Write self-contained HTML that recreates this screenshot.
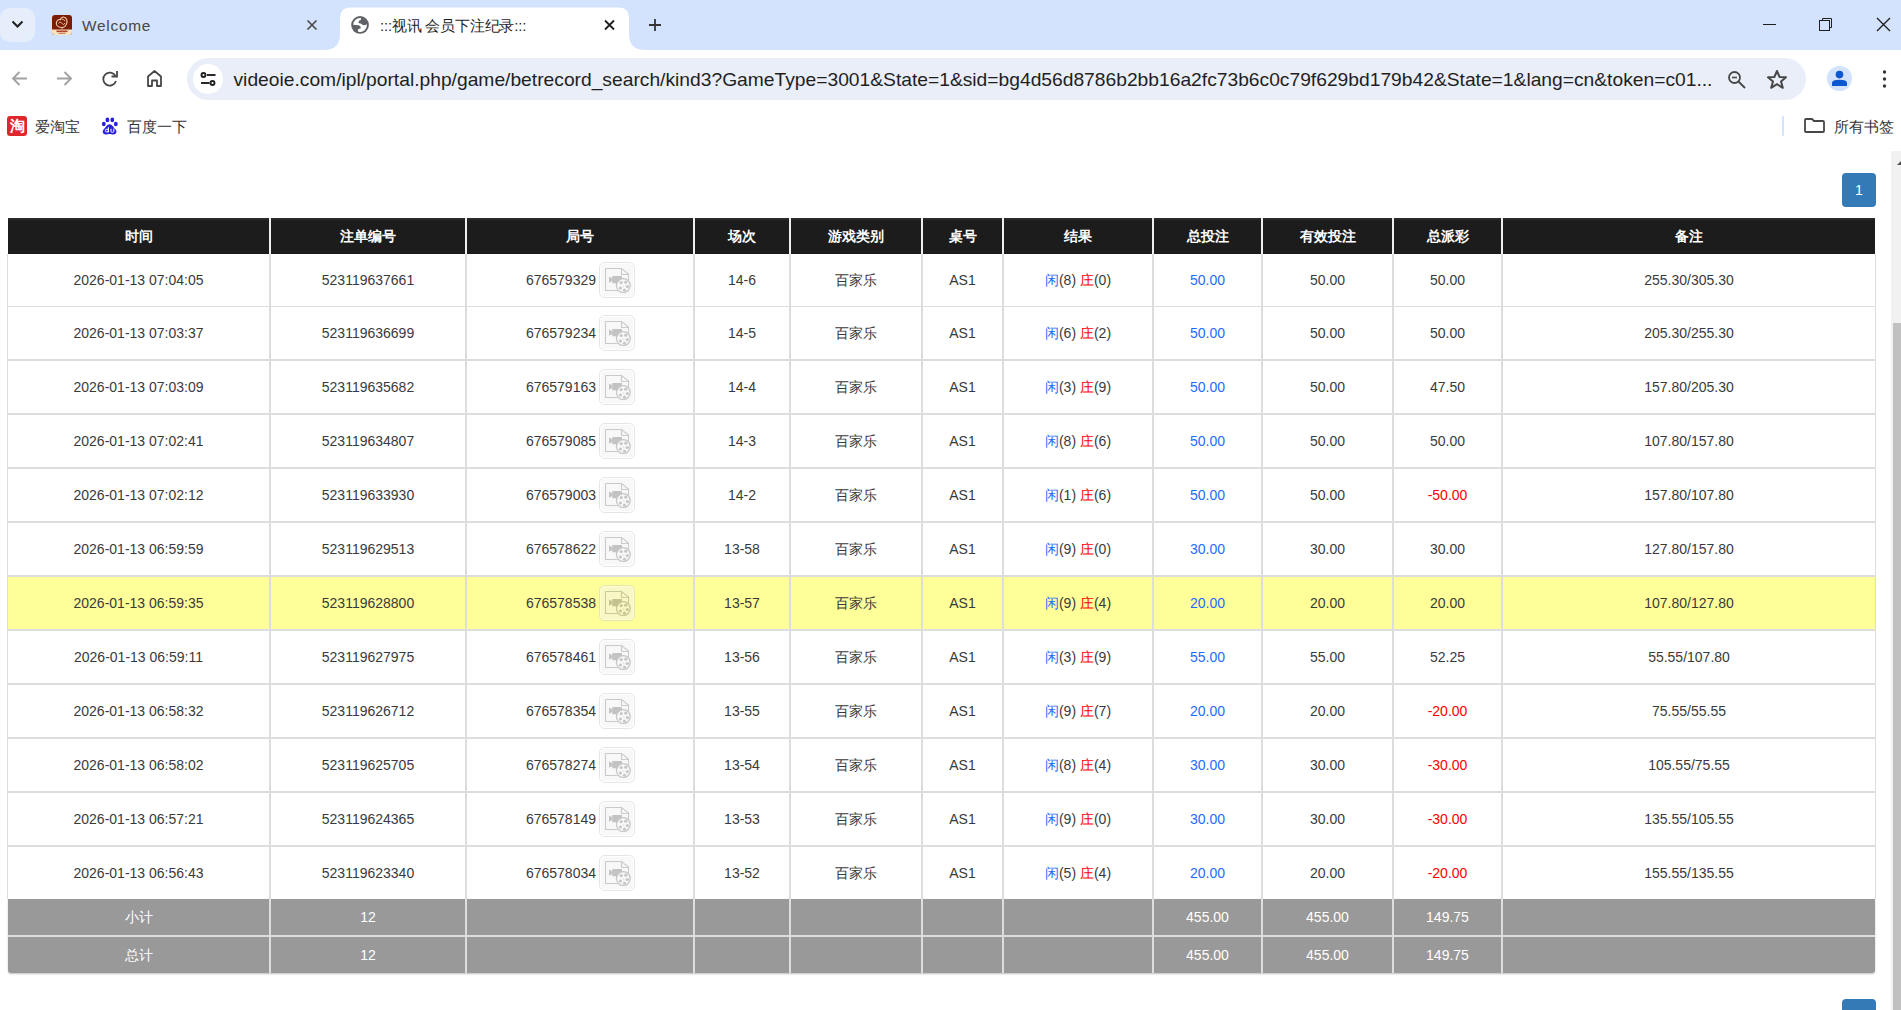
<!DOCTYPE html>
<html><head><meta charset="utf-8">
<style>
*{box-sizing:border-box;margin:0;padding:0}
html,body{width:1901px;height:1010px;overflow:hidden;background:#fff;font-family:"Liberation Sans",sans-serif}
body{position:relative}
.abs{position:absolute}
svg{position:absolute;overflow:visible}
#tabs{left:0;top:0;width:1901px;height:50px;background:#d3e3fd}
#omni{left:187px;top:58px;width:1619px;height:42px;border-radius:21px;background:#eaeef8}
#url{left:233.5px;top:67.7px;font-size:19.24px;color:#1f1f1f;white-space:nowrap;line-height:24px}
.bmt{font-size:14.5px;color:#333;white-space:nowrap;line-height:20px}
.tabt{font-size:15px;white-space:nowrap;line-height:20px}
.hd{position:absolute;top:218px;height:36px;background:linear-gradient(#2e2e2e,#1c1c1c 3px)}
.vl{position:absolute;width:2px;background:#ddd}
.hl{position:absolute;height:1px;background:#ddd}
.cell{position:absolute;text-align:center;font-size:14px;color:#3a3a3a;white-space:nowrap;line-height:18px}
.ft{color:#fff}
.th{position:absolute;text-align:center;font-size:14px;color:#fff;font-weight:bold;white-space:nowrap;top:226px;line-height:20px}
.blue{color:#1f6bff}
.red{color:#f00}
.vbox{position:absolute}
.pg{position:absolute;width:34px;height:34px;background:#337ab7;border-radius:4px;color:#fff;font-size:14px;text-align:center;line-height:34px}
</style></head><body>
<div id="tabs" class="abs"></div>
<!-- tab dropdown -->
<div class="abs" style="left:0;top:8px;width:35px;height:34px;border-radius:10px;background:#e6eefc"></div>
<svg style="left:0;top:0" width="40" height="50"><path d="M12.5 21.5 L17.5 26.5 L22.5 21.5" fill="none" stroke="#1f1f1f" stroke-width="2"/></svg>
<!-- inactive tab favicon -->
<svg style="left:52px;top:15px" width="20" height="20" viewBox="0 0 20 20">
  <defs><clipPath id="fc"><rect x="0" y="0" width="20" height="20" rx="3"/></clipPath></defs>
  <g clip-path="url(#fc)">
    <rect x="0" y="0" width="20" height="20" fill="#7a1d08"/>
    <rect x="0" y="14.5" width="20" height="5.5" fill="#f6e3c0"/>
    <rect x="4.5" y="15.5" width="11" height="1.6" fill="#b2452a"/>
    <rect x="6.5" y="17.8" width="7" height="1" fill="#c46b52"/>
  </g>
  <path d="M10 12.5 C7 12.5 4.3 10.8 4.3 8.2 C4.3 5.6 6.6 4.3 8.4 4.6 C8.9 2.9 10.6 1.6 12.3 2.2 C14.8 3 15.6 6 14.6 8.6 C13.8 10.8 12 12.5 10 12.5 Z" fill="none" stroke="#f1d2a8" stroke-width="1.1"/>
  <path d="M6.5 8.3 C7.5 6.8 9.5 7 10.2 8.6 C10.8 10 12.6 9.6 12.8 8.1 M9.8 4.5 C11 4 12.6 4.8 13 6.3" fill="none" stroke="#f1d2a8" stroke-width="0.9"/>
  <path d="M10 12.5 L9.3 14.3 L10.7 14.3 Z" fill="#f1d2a8"/>
</svg>
<div class="abs tabt" style="left:82px;top:16px;color:#474747;font-size:15.4px;letter-spacing:0.75px">Welcome</div>
<svg style="left:0;top:0" width="700" height="50">
  <path d="M307.5 20.5 L316.5 29.5 M316.5 20.5 L307.5 29.5" stroke="#474747" stroke-width="1.6"/>
  <!-- active tab shape -->
  <path d="M324 50 Q340 50 340 34 L340 18 Q340 7.5 350 7.5 L619 7.5 Q629 7.5 629 18 L629 34 Q629 50 645 50 Z" fill="#fff"/>
  <circle cx="360.05" cy="24.88" r="8.84" fill="#5f6368"/><path d="M353.11 24.64 A6.94 6.94 0 0 1 360.95 18.11 L360.83 19.89 L358.93 20.84 L358.46 22.98 L361.31 23.69 L362.73 25.12 L364.63 25.36 L366.77 24.17 A6.94 6.94 0 0 1 358.22 31.77 L357.74 30.59 L358.22 29.16 L360.83 28.21 L360.36 26.31 L358.69 25.36 Z" fill="#fff"/>
  <path d="M605 20.5 L614 29.5 M614 20.5 L605 29.5" stroke="#1f1f1f" stroke-width="1.8"/>
  <path d="M655 19 L655 31 M649 25 L661 25" stroke="#333" stroke-width="1.8"/>
</svg>
<div class="abs tabt" style="left:380px;top:16px;color:#1f1f1f;letter-spacing:-0.2px">:::视讯 会员下注纪录:::</div>
<!-- window controls -->
<svg style="left:0;top:0" width="1901" height="50">
  <path d="M1763 24.5 L1776 24.5" stroke="#1f1f1f" stroke-width="1"/>
  <rect x="1819.5" y="20.5" width="10" height="10" fill="none" stroke="#1f1f1f" stroke-width="1"/>
  <path d="M1822.5 20.5 L1822.5 18.5 L1831.5 18.5 L1831.5 27.5 L1829.5 27.5" fill="none" stroke="#1f1f1f" stroke-width="1"/>
  <path d="M1877 18 L1890 31 M1890 18 L1877 31" stroke="#1f1f1f" stroke-width="1.35"/>
</svg>
<!-- toolbar -->
<svg style="left:0;top:0" width="200" height="110">
  <path d="M27 78.5 L13 78.5 M19.5 72 L13 78.5 L19.5 85" fill="none" stroke="#a2a2a2" stroke-width="1.9"/>
  <path d="M57 78.5 L71 78.5 M64.5 72 L71 78.5 L64.5 85" fill="none" stroke="#a2a2a2" stroke-width="1.9"/>
  <path d="M115.5 76 A6.5 6.5 0 1 0 116 81" fill="none" stroke="#474747" stroke-width="1.8"/>
  <path d="M117 71 L117 76.5 L111.5 76.5" fill="none" stroke="#474747" stroke-width="1.8"/>
  <path d="M148 86 L148 76.5 L154.5 71 L161 76.5 L161 86 L157 86 L157 80.5 L152 80.5 L152 86 Z" fill="none" stroke="#474747" stroke-width="1.8" stroke-linejoin="round"/>
</svg>
<div id="omni" class="abs"></div>
<svg style="left:0;top:0" width="1901" height="110">
  <circle cx="208" cy="79" r="15" fill="#fff"/>
  <circle cx="203.5" cy="75" r="2" fill="none" stroke="#1f1f1f" stroke-width="1.9"/>
  <path d="M207 75 L215.5 75" stroke="#1f1f1f" stroke-width="1.9"/>
  <circle cx="212.5" cy="83" r="2" fill="none" stroke="#1f1f1f" stroke-width="1.9"/>
  <path d="M201 83 L209.5 83" stroke="#1f1f1f" stroke-width="1.9"/>
  <!-- zoom out -->
  <circle cx="1734.5" cy="77.5" r="5.5" fill="none" stroke="#474747" stroke-width="1.8"/>
  <path d="M1732 77.5 L1737 77.5" stroke="#474747" stroke-width="1.6"/>
  <path d="M1738.5 81.5 L1745 88" stroke="#474747" stroke-width="1.8"/>
  <!-- star -->
  <path d="M1777 71 L1779.6 77 L1786 77.3 L1781 81.4 L1782.8 87.8 L1777 84.2 L1771.2 87.8 L1773 81.4 L1768 77.3 L1774.4 77 Z" fill="none" stroke="#474747" stroke-width="2" stroke-linejoin="round"/>
  <!-- profile -->
  <circle cx="1839.5" cy="78.5" r="12.6" fill="#d3e3fd"/>
  <circle cx="1839.5" cy="74.6" r="3.8" fill="#0b57d0"/>
  <path d="M1832 86 L1832 83 Q1832 79.8 1839.5 79.8 Q1847 79.8 1847 83 L1847 86 Z" fill="#0b57d0"/>
  <circle cx="1884.5" cy="72" r="1.7" fill="#333"/>
  <circle cx="1884.5" cy="79" r="1.7" fill="#333"/>
  <circle cx="1884.5" cy="86" r="1.7" fill="#333"/>
</svg>
<div id="url" class="abs">videoie.com/ipl/portal.php/game/betrecord_search/kind3?GameType=3001&amp;State=1&amp;sid=bg4d56d8786b2bb16a2fc73b6c0c79f629bd179b42&amp;State=1&amp;lang=cn&amp;token=c01...</div>
<!-- bookmarks -->
<div class="abs" style="left:7px;top:116px;width:20px;height:20px;border-radius:3px;background:#e0262d;color:#fff;font-size:15px;font-weight:bold;line-height:20px;text-align:center">淘</div>
<div class="abs bmt" style="left:35px;top:117px">爱淘宝</div>
<svg style="left:0;top:0" width="200" height="150">
  <ellipse cx="107.4" cy="119.9" rx="1.9" ry="2.4" fill="#2a1fe0"/>
  <ellipse cx="112.3" cy="119.9" rx="1.9" ry="2.4" fill="#2a1fe0"/>
  <ellipse cx="103.8" cy="124" rx="1.9" ry="2.2" fill="#2a1fe0"/>
  <ellipse cx="115.8" cy="124" rx="1.9" ry="2.2" fill="#2a1fe0"/>
  <path d="M109.6 124.3 C112 124.3 113.5 127.3 115 128.8 C117.6 131.4 116.6 134.4 113.5 134.4 C112 134.4 111 133.9 109.6 133.9 C108.2 133.9 107.2 134.4 105.7 134.4 C102.6 134.4 101.6 131.4 104.2 128.8 C105.7 127.3 107.2 124.3 109.6 124.3 Z" fill="#2a1fe0"/>
  <circle cx="106.9" cy="130.6" r="1.5" fill="none" stroke="#fff" stroke-width="1"/>
  <path d="M108.4 127.2 L108.4 132.3 M111 128.8 L111 131.4 Q111 132.3 112.4 132.3 Q113.8 132.3 113.8 131.4 L113.8 128.6" fill="none" stroke="#fff" stroke-width="1"/>
  </svg>
<div class="abs bmt" style="left:127px;top:117px">百度一下</div>
<div class="abs" style="left:1782px;top:116px;width:2px;height:20px;background:#d3e3fd;border-radius:1px"></div>
<svg style="left:0;top:0" width="1901" height="150">
  <path d="M1806 119 L1812 119 L1814 121 L1823 121 Q1824 121 1824 122 L1824 131 Q1824 132 1823 132 L1806 132 Q1805 132 1805 131 L1805 120 Q1805 119 1806 119 Z" fill="none" stroke="#474747" stroke-width="1.8" stroke-linejoin="round"/>
</svg>
<div class="abs bmt" style="left:1834px;top:117px">所有书签</div>
<!-- page -->
<div class="pg" style="left:1842px;top:173px">1</div>
<div class="pg" style="left:1842px;top:999px"></div>
<svg width="0" height="0" style="position:absolute"><defs><symbol id="vid" viewBox="0 0 36 36"><g opacity="0.5">
<rect x="0.5" y="0.5" width="35" height="35" rx="5" fill="#f3f3f3" stroke="#cdcdcd" stroke-width="1"/>
<rect x="1.5" y="1.5" width="33" height="33" rx="4" fill="none" stroke="#ffffff" stroke-width="1"/>
<path d="M6.5 6.5 L22.5 6.5 L29.5 12 L29.5 19" fill="none" stroke="#979797" stroke-width="1.1"/>
<path d="M6.5 6.5 L6.5 28.5 L18.5 28.5" fill="none" stroke="#979797" stroke-width="1.1"/>
<path d="M22.5 6.5 L22.5 12.5 L29.5 12.5" fill="none" stroke="#979797" stroke-width="1.1"/>
<rect x="13.3" y="14" width="9.7" height="7.3" fill="#898989"/>
<path d="M10 14.2 L11.5 15.6 L13.5 16 L13.5 19.3 L11.5 19.7 L10 21.1 Z" fill="#898989"/>
<circle cx="24.3" cy="23.6" r="6.9" fill="#f3f3f3" stroke="#8d8d8d" stroke-width="1.2"/>
<circle cx="22.2" cy="20.6" r="1.6" fill="#919191"/>
<circle cx="26.7" cy="20.2" r="1.6" fill="#919191"/>
<circle cx="28.4" cy="24.6" r="1.6" fill="#919191"/>
<circle cx="25.5" cy="28.2" r="1.6" fill="#919191"/>
<circle cx="21.4" cy="26" r="1.6" fill="#919191"/>
<circle cx="24.8" cy="24.2" r="0.6" fill="#9f9f9f"/>
</g></symbol></defs></svg>
<div class="hd" style="left:8px;width:1867px"></div>
<div class="th" style="left:8px;width:261px">时间</div>
<div class="th" style="left:271px;width:194px">注单编号</div>
<div class="th" style="left:467px;width:226px">局号</div>
<div class="th" style="left:695px;width:94px">场次</div>
<div class="th" style="left:791px;width:130px">游戏类别</div>
<div class="th" style="left:923px;width:79px">桌号</div>
<div class="th" style="left:1004px;width:148px">结果</div>
<div class="th" style="left:1154px;width:107px">总投注</div>
<div class="th" style="left:1263px;width:129px">有效投注</div>
<div class="th" style="left:1394px;width:107px">总派彩</div>
<div class="th" style="left:1503px;width:372px">备注</div>
<div class="cell" style="left:8px;width:261px;top:271px">2026-01-13 07:04:05</div>
<div class="cell" style="left:271px;width:194px;top:271px">523119637661</div>
<div class="cell" style="left:467px;width:129px;top:271px;text-align:right">676579329</div>
<div class="cell" style="left:695px;width:94px;top:271px">14-6</div>
<div class="cell" style="left:791px;width:130px;top:271px">百家乐</div>
<div class="cell" style="left:923px;width:79px;top:271px">AS1</div>
<div class="cell" style="left:1004px;width:148px;top:271px"><span class="blue">闲</span>(8) <span class="red">庄</span>(0)</div>
<div class="cell" style="left:1154px;width:107px;top:271px"><span class="blue">50.00</span></div>
<div class="cell" style="left:1263px;width:129px;top:271px">50.00</div>
<div class="cell" style="left:1394px;width:107px;top:271px">50.00</div>
<div class="cell" style="left:1503px;width:372px;top:271px">255.30/305.30</div>
<svg class="vbox" style="left:599px;top:262px" width="36" height="36"><use href="#vid"/></svg>
<div class="cell" style="left:8px;width:261px;top:324px">2026-01-13 07:03:37</div>
<div class="cell" style="left:271px;width:194px;top:324px">523119636699</div>
<div class="cell" style="left:467px;width:129px;top:324px;text-align:right">676579234</div>
<div class="cell" style="left:695px;width:94px;top:324px">14-5</div>
<div class="cell" style="left:791px;width:130px;top:324px">百家乐</div>
<div class="cell" style="left:923px;width:79px;top:324px">AS1</div>
<div class="cell" style="left:1004px;width:148px;top:324px"><span class="blue">闲</span>(6) <span class="red">庄</span>(2)</div>
<div class="cell" style="left:1154px;width:107px;top:324px"><span class="blue">50.00</span></div>
<div class="cell" style="left:1263px;width:129px;top:324px">50.00</div>
<div class="cell" style="left:1394px;width:107px;top:324px">50.00</div>
<div class="cell" style="left:1503px;width:372px;top:324px">205.30/255.30</div>
<svg class="vbox" style="left:599px;top:315px" width="36" height="36"><use href="#vid"/></svg>
<div class="cell" style="left:8px;width:261px;top:378px">2026-01-13 07:03:09</div>
<div class="cell" style="left:271px;width:194px;top:378px">523119635682</div>
<div class="cell" style="left:467px;width:129px;top:378px;text-align:right">676579163</div>
<div class="cell" style="left:695px;width:94px;top:378px">14-4</div>
<div class="cell" style="left:791px;width:130px;top:378px">百家乐</div>
<div class="cell" style="left:923px;width:79px;top:378px">AS1</div>
<div class="cell" style="left:1004px;width:148px;top:378px"><span class="blue">闲</span>(3) <span class="red">庄</span>(9)</div>
<div class="cell" style="left:1154px;width:107px;top:378px"><span class="blue">50.00</span></div>
<div class="cell" style="left:1263px;width:129px;top:378px">50.00</div>
<div class="cell" style="left:1394px;width:107px;top:378px">47.50</div>
<div class="cell" style="left:1503px;width:372px;top:378px">157.80/205.30</div>
<svg class="vbox" style="left:599px;top:369px" width="36" height="36"><use href="#vid"/></svg>
<div class="cell" style="left:8px;width:261px;top:432px">2026-01-13 07:02:41</div>
<div class="cell" style="left:271px;width:194px;top:432px">523119634807</div>
<div class="cell" style="left:467px;width:129px;top:432px;text-align:right">676579085</div>
<div class="cell" style="left:695px;width:94px;top:432px">14-3</div>
<div class="cell" style="left:791px;width:130px;top:432px">百家乐</div>
<div class="cell" style="left:923px;width:79px;top:432px">AS1</div>
<div class="cell" style="left:1004px;width:148px;top:432px"><span class="blue">闲</span>(8) <span class="red">庄</span>(6)</div>
<div class="cell" style="left:1154px;width:107px;top:432px"><span class="blue">50.00</span></div>
<div class="cell" style="left:1263px;width:129px;top:432px">50.00</div>
<div class="cell" style="left:1394px;width:107px;top:432px">50.00</div>
<div class="cell" style="left:1503px;width:372px;top:432px">107.80/157.80</div>
<svg class="vbox" style="left:599px;top:423px" width="36" height="36"><use href="#vid"/></svg>
<div class="cell" style="left:8px;width:261px;top:486px">2026-01-13 07:02:12</div>
<div class="cell" style="left:271px;width:194px;top:486px">523119633930</div>
<div class="cell" style="left:467px;width:129px;top:486px;text-align:right">676579003</div>
<div class="cell" style="left:695px;width:94px;top:486px">14-2</div>
<div class="cell" style="left:791px;width:130px;top:486px">百家乐</div>
<div class="cell" style="left:923px;width:79px;top:486px">AS1</div>
<div class="cell" style="left:1004px;width:148px;top:486px"><span class="blue">闲</span>(1) <span class="red">庄</span>(6)</div>
<div class="cell" style="left:1154px;width:107px;top:486px"><span class="blue">50.00</span></div>
<div class="cell" style="left:1263px;width:129px;top:486px">50.00</div>
<div class="cell" style="left:1394px;width:107px;top:486px"><span class="red">-50.00</span></div>
<div class="cell" style="left:1503px;width:372px;top:486px">157.80/107.80</div>
<svg class="vbox" style="left:599px;top:477px" width="36" height="36"><use href="#vid"/></svg>
<div class="cell" style="left:8px;width:261px;top:540px">2026-01-13 06:59:59</div>
<div class="cell" style="left:271px;width:194px;top:540px">523119629513</div>
<div class="cell" style="left:467px;width:129px;top:540px;text-align:right">676578622</div>
<div class="cell" style="left:695px;width:94px;top:540px">13-58</div>
<div class="cell" style="left:791px;width:130px;top:540px">百家乐</div>
<div class="cell" style="left:923px;width:79px;top:540px">AS1</div>
<div class="cell" style="left:1004px;width:148px;top:540px"><span class="blue">闲</span>(9) <span class="red">庄</span>(0)</div>
<div class="cell" style="left:1154px;width:107px;top:540px"><span class="blue">30.00</span></div>
<div class="cell" style="left:1263px;width:129px;top:540px">30.00</div>
<div class="cell" style="left:1394px;width:107px;top:540px">30.00</div>
<div class="cell" style="left:1503px;width:372px;top:540px">127.80/157.80</div>
<svg class="vbox" style="left:599px;top:531px" width="36" height="36"><use href="#vid"/></svg>
<div class="abs" style="left:8px;top:576px;width:1867px;height:54px;background:#ffff99"></div>
<div class="cell" style="left:8px;width:261px;top:594px">2026-01-13 06:59:35</div>
<div class="cell" style="left:271px;width:194px;top:594px">523119628800</div>
<div class="cell" style="left:467px;width:129px;top:594px;text-align:right">676578538</div>
<div class="cell" style="left:695px;width:94px;top:594px">13-57</div>
<div class="cell" style="left:791px;width:130px;top:594px">百家乐</div>
<div class="cell" style="left:923px;width:79px;top:594px">AS1</div>
<div class="cell" style="left:1004px;width:148px;top:594px"><span class="blue">闲</span>(9) <span class="red">庄</span>(4)</div>
<div class="cell" style="left:1154px;width:107px;top:594px"><span class="blue">20.00</span></div>
<div class="cell" style="left:1263px;width:129px;top:594px">20.00</div>
<div class="cell" style="left:1394px;width:107px;top:594px">20.00</div>
<div class="cell" style="left:1503px;width:372px;top:594px">107.80/127.80</div>
<svg class="vbox" style="left:599px;top:585px" width="36" height="36"><use href="#vid"/></svg>
<div class="cell" style="left:8px;width:261px;top:648px">2026-01-13 06:59:11</div>
<div class="cell" style="left:271px;width:194px;top:648px">523119627975</div>
<div class="cell" style="left:467px;width:129px;top:648px;text-align:right">676578461</div>
<div class="cell" style="left:695px;width:94px;top:648px">13-56</div>
<div class="cell" style="left:791px;width:130px;top:648px">百家乐</div>
<div class="cell" style="left:923px;width:79px;top:648px">AS1</div>
<div class="cell" style="left:1004px;width:148px;top:648px"><span class="blue">闲</span>(3) <span class="red">庄</span>(9)</div>
<div class="cell" style="left:1154px;width:107px;top:648px"><span class="blue">55.00</span></div>
<div class="cell" style="left:1263px;width:129px;top:648px">55.00</div>
<div class="cell" style="left:1394px;width:107px;top:648px">52.25</div>
<div class="cell" style="left:1503px;width:372px;top:648px">55.55/107.80</div>
<svg class="vbox" style="left:599px;top:639px" width="36" height="36"><use href="#vid"/></svg>
<div class="cell" style="left:8px;width:261px;top:702px">2026-01-13 06:58:32</div>
<div class="cell" style="left:271px;width:194px;top:702px">523119626712</div>
<div class="cell" style="left:467px;width:129px;top:702px;text-align:right">676578354</div>
<div class="cell" style="left:695px;width:94px;top:702px">13-55</div>
<div class="cell" style="left:791px;width:130px;top:702px">百家乐</div>
<div class="cell" style="left:923px;width:79px;top:702px">AS1</div>
<div class="cell" style="left:1004px;width:148px;top:702px"><span class="blue">闲</span>(9) <span class="red">庄</span>(7)</div>
<div class="cell" style="left:1154px;width:107px;top:702px"><span class="blue">20.00</span></div>
<div class="cell" style="left:1263px;width:129px;top:702px">20.00</div>
<div class="cell" style="left:1394px;width:107px;top:702px"><span class="red">-20.00</span></div>
<div class="cell" style="left:1503px;width:372px;top:702px">75.55/55.55</div>
<svg class="vbox" style="left:599px;top:693px" width="36" height="36"><use href="#vid"/></svg>
<div class="cell" style="left:8px;width:261px;top:756px">2026-01-13 06:58:02</div>
<div class="cell" style="left:271px;width:194px;top:756px">523119625705</div>
<div class="cell" style="left:467px;width:129px;top:756px;text-align:right">676578274</div>
<div class="cell" style="left:695px;width:94px;top:756px">13-54</div>
<div class="cell" style="left:791px;width:130px;top:756px">百家乐</div>
<div class="cell" style="left:923px;width:79px;top:756px">AS1</div>
<div class="cell" style="left:1004px;width:148px;top:756px"><span class="blue">闲</span>(8) <span class="red">庄</span>(4)</div>
<div class="cell" style="left:1154px;width:107px;top:756px"><span class="blue">30.00</span></div>
<div class="cell" style="left:1263px;width:129px;top:756px">30.00</div>
<div class="cell" style="left:1394px;width:107px;top:756px"><span class="red">-30.00</span></div>
<div class="cell" style="left:1503px;width:372px;top:756px">105.55/75.55</div>
<svg class="vbox" style="left:599px;top:747px" width="36" height="36"><use href="#vid"/></svg>
<div class="cell" style="left:8px;width:261px;top:810px">2026-01-13 06:57:21</div>
<div class="cell" style="left:271px;width:194px;top:810px">523119624365</div>
<div class="cell" style="left:467px;width:129px;top:810px;text-align:right">676578149</div>
<div class="cell" style="left:695px;width:94px;top:810px">13-53</div>
<div class="cell" style="left:791px;width:130px;top:810px">百家乐</div>
<div class="cell" style="left:923px;width:79px;top:810px">AS1</div>
<div class="cell" style="left:1004px;width:148px;top:810px"><span class="blue">闲</span>(9) <span class="red">庄</span>(0)</div>
<div class="cell" style="left:1154px;width:107px;top:810px"><span class="blue">30.00</span></div>
<div class="cell" style="left:1263px;width:129px;top:810px">30.00</div>
<div class="cell" style="left:1394px;width:107px;top:810px"><span class="red">-30.00</span></div>
<div class="cell" style="left:1503px;width:372px;top:810px">135.55/105.55</div>
<svg class="vbox" style="left:599px;top:801px" width="36" height="36"><use href="#vid"/></svg>
<div class="cell" style="left:8px;width:261px;top:864px">2026-01-13 06:56:43</div>
<div class="cell" style="left:271px;width:194px;top:864px">523119623340</div>
<div class="cell" style="left:467px;width:129px;top:864px;text-align:right">676578034</div>
<div class="cell" style="left:695px;width:94px;top:864px">13-52</div>
<div class="cell" style="left:791px;width:130px;top:864px">百家乐</div>
<div class="cell" style="left:923px;width:79px;top:864px">AS1</div>
<div class="cell" style="left:1004px;width:148px;top:864px"><span class="blue">闲</span>(5) <span class="red">庄</span>(4)</div>
<div class="cell" style="left:1154px;width:107px;top:864px"><span class="blue">20.00</span></div>
<div class="cell" style="left:1263px;width:129px;top:864px">20.00</div>
<div class="cell" style="left:1394px;width:107px;top:864px"><span class="red">-20.00</span></div>
<div class="cell" style="left:1503px;width:372px;top:864px">155.55/135.55</div>
<svg class="vbox" style="left:599px;top:855px" width="36" height="36"><use href="#vid"/></svg>
<div class="hl" style="left:8px;top:306px;width:1867px;height:1px"></div>
<div class="hl" style="left:8px;top:359px;width:1867px;height:2px"></div>
<div class="hl" style="left:8px;top:413px;width:1867px;height:2px"></div>
<div class="hl" style="left:8px;top:467px;width:1867px;height:2px"></div>
<div class="hl" style="left:8px;top:521px;width:1867px;height:2px"></div>
<div class="hl" style="left:8px;top:575px;width:1867px;height:2px"></div>
<div class="hl" style="left:8px;top:629px;width:1867px;height:2px"></div>
<div class="hl" style="left:8px;top:683px;width:1867px;height:2px"></div>
<div class="hl" style="left:8px;top:737px;width:1867px;height:2px"></div>
<div class="hl" style="left:8px;top:791px;width:1867px;height:2px"></div>
<div class="hl" style="left:8px;top:845px;width:1867px;height:2px"></div>
<div class="abs" style="left:8px;top:899px;width:1867px;height:74px;background:#999;border-radius:0 0 3px 3px;box-shadow:0 1px 2px rgba(0,0,0,.25)"></div>
<div class="hl" style="left:8px;top:935px;width:1867px;height:2px;background:#ddd"></div>
<div class="cell ft" style="left:8px;width:261px;top:908px">小计</div>
<div class="cell ft" style="left:271px;width:194px;top:908px">12</div>
<div class="cell ft" style="left:1154px;width:107px;top:908px">455.00</div>
<div class="cell ft" style="left:1263px;width:129px;top:908px">455.00</div>
<div class="cell ft" style="left:1394px;width:107px;top:908px">149.75</div>
<div class="cell ft" style="left:8px;width:261px;top:946px">总计</div>
<div class="cell ft" style="left:271px;width:194px;top:946px">12</div>
<div class="cell ft" style="left:1154px;width:107px;top:946px">455.00</div>
<div class="cell ft" style="left:1263px;width:129px;top:946px">455.00</div>
<div class="cell ft" style="left:1394px;width:107px;top:946px">149.75</div>
<div class="vl" style="left:269px;top:218px;height:36px;background:#eee"></div>
<div class="vl" style="left:269px;top:254px;height:719px"></div>
<div class="vl" style="left:465px;top:218px;height:36px;background:#eee"></div>
<div class="vl" style="left:465px;top:254px;height:719px"></div>
<div class="vl" style="left:693px;top:218px;height:36px;background:#eee"></div>
<div class="vl" style="left:693px;top:254px;height:719px"></div>
<div class="vl" style="left:789px;top:218px;height:36px;background:#eee"></div>
<div class="vl" style="left:789px;top:254px;height:719px"></div>
<div class="vl" style="left:921px;top:218px;height:36px;background:#eee"></div>
<div class="vl" style="left:921px;top:254px;height:719px"></div>
<div class="vl" style="left:1002px;top:218px;height:36px;background:#eee"></div>
<div class="vl" style="left:1002px;top:254px;height:719px"></div>
<div class="vl" style="left:1152px;top:218px;height:36px;background:#eee"></div>
<div class="vl" style="left:1152px;top:254px;height:719px"></div>
<div class="vl" style="left:1261px;top:218px;height:36px;background:#eee"></div>
<div class="vl" style="left:1261px;top:254px;height:719px"></div>
<div class="vl" style="left:1392px;top:218px;height:36px;background:#eee"></div>
<div class="vl" style="left:1392px;top:254px;height:719px"></div>
<div class="vl" style="left:1501px;top:218px;height:36px;background:#eee"></div>
<div class="vl" style="left:1501px;top:254px;height:719px"></div>
<div class="vl" style="left:7px;top:254px;height:645px;width:1px"></div>
<div class="vl" style="left:1875px;top:254px;height:645px;width:1px"></div>
<div class="abs" style="left:7px;top:899px;width:1px;height:73px;background:#f2f2f2"></div>
<!-- scrollbar -->
<div class="abs" style="left:1891px;top:151px;width:10px;height:859px;background:#f1f1f1"></div>
<svg style="left:0;top:0" width="1901" height="200"><path d="M1901.5 160.5 L1906 165 L1897 165 Z" fill="#505050"/></svg>
<div class="abs" style="left:1893px;top:323px;width:8px;height:687px;background:#c1c1c1"></div>
</body></html>
